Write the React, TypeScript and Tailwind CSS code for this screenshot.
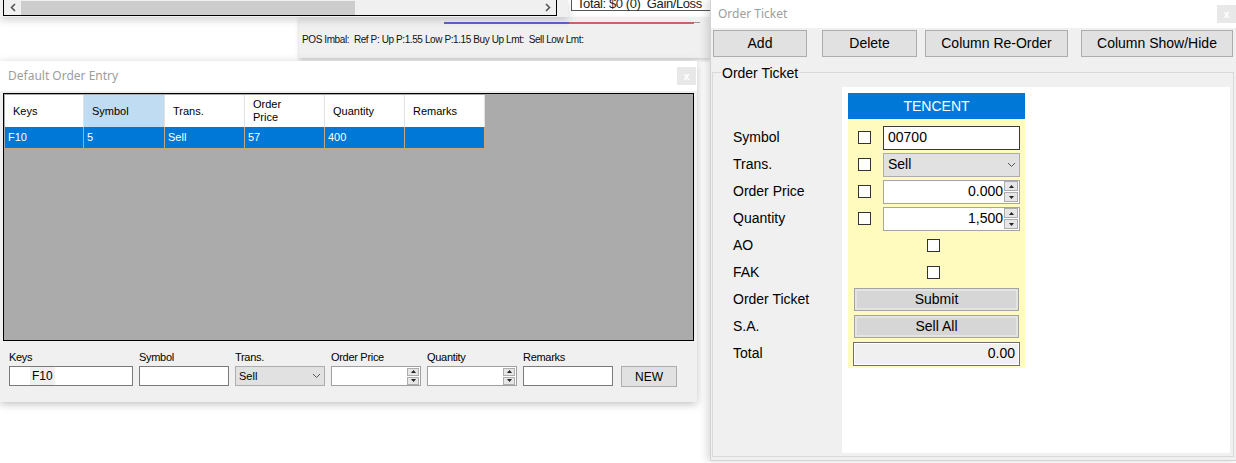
import React from 'react';

const Chevron = ({ w = 9 }: { w?: number }) => (
  <svg width={w} height="6" viewBox="0 0 9 6">
    <path d="M1 1 L4.5 4.5 L8 1" fill="none" stroke="#555" strokeWidth="1" />
  </svg>
);

const Spinner = ({ size = 'lg' }: { size?: 'lg' | 'sm' }) => {
  const box =
    size === 'lg'
      ? 'w-[14px] h-[10px]'
      : 'w-[12px] h-[8px]';
  return (
    <div className="flex flex-col gap-[1px] mr-[1px]">
      <div className={`${box} bg-[#e6e6e6] border border-[#adadad] flex items-center justify-center`}>
        <svg width="5" height="3" viewBox="0 0 5 3"><path d="M0 3 L2.5 0 L5 3Z" fill="#222" /></svg>
      </div>
      <div className={`${box} bg-[#e6e6e6] border border-[#adadad] flex items-center justify-center`}>
        <svg width="5" height="3" viewBox="0 0 5 3"><path d="M0 0 L2.5 3 L5 0Z" fill="#222" /></svg>
      </div>
    </div>
  );
};

const CloseBtn = () => (
  <div className="w-[19px] h-[18px] bg-[#e8e8e8] flex items-center justify-center text-white text-[11px] leading-none font-bold">
    x
  </div>
);

const Check = () => <div className="w-[13px] h-[13px] border border-[#333] bg-white" />;

const columns = [
  { head: 'Keys', val: 'F10', w: 'w-[79px]' },
  { head: 'Symbol', val: '5', w: 'w-[81px]', hl: true },
  { head: 'Trans.', val: 'Sell', w: 'w-[80px]' },
  { head: 'Order\nPrice', val: '57', w: 'w-[80px]' },
  { head: 'Quantity', val: '400', w: 'w-[80px]' },
  { head: 'Remarks', val: '', w: 'w-[80px]' },
];

const formFields = [
  { label: 'Keys', w: 'w-[124px]', kind: 'keys' },
  { label: 'Symbol', w: 'w-[90px]', kind: 'text' },
  { label: 'Trans.', w: 'w-[90px]', kind: 'select' },
  { label: 'Order Price', w: 'w-[90px]', kind: 'spin' },
  { label: 'Quantity', w: 'w-[90px]', kind: 'spin' },
  { label: 'Remarks', w: 'w-[90px]', kind: 'text' },
];

const ticketLabels = ['Symbol', 'Trans.', 'Order Price', 'Quantity', 'AO', 'FAK', 'Order Ticket', 'S.A.', 'Total'];

export default function App() {
  return (
    <div className="relative w-[1236px] h-[463px] overflow-hidden bg-white font-['Liberation_Sans',Arial,sans-serif] text-black">
      {/* POS imbalance panel */}
      <div className="absolute left-[299px] top-[17px] w-[411px] h-[41px] bg-[#f0f0f0] shadow-[0_2px_4px_rgba(0,0,0,0.2)] flex flex-col">
        <div className="flex mt-[5px] ml-[145px]">
          <div className="w-[125px] h-[2px] bg-[#6262c8]" />
          <div className="w-[125px] h-[2px] bg-[#c86464]" />
          <div className="w-[6px] h-[1px] bg-[#999]" />
        </div>
        <div className="mt-[10px] pl-[3px] text-[10px] leading-[12px] tracking-[-0.4px] text-[#111] whitespace-pre">
          POS Imbal:  Ref P: Up P:1.55 Low P:1.15 Buy Up Lmt:  Sell Low Lmt:
        </div>
      </div>

      {/* top window with scrollbar */}
      <div className="absolute left-0 top-0 w-[568px] h-[17px] bg-[#f0f0f0] shadow-[0_3px_8px_rgba(0,0,0,0.18)]">
        <div className="ml-[3px] -mt-[1px] w-[554px] h-[17px] border border-black bg-[#f0f0f0] flex items-center">
          <div className="w-[17px] flex justify-center">
            <svg width="6" height="9" viewBox="0 0 6 9"><path d="M5 1 L1.5 4.5 L5 8" fill="none" stroke="#555" strokeWidth="1.6" /></svg>
          </div>
          <div className="w-[334px] h-[14px] bg-[#cdcdcd]" />
          <div className="flex-1" />
          <div className="w-[17px] flex justify-center">
            <svg width="6" height="9" viewBox="0 0 6 9"><path d="M1 1 L4.5 4.5 L1 8" fill="none" stroke="#555" strokeWidth="1.6" /></svg>
          </div>
        </div>
      </div>

      {/* total box */}
      <div className="absolute left-[571px] -top-[4px] w-[200px] h-[15px] border-l border-b border-[#555] bg-white pl-[5px] text-[13px] leading-[15px] tracking-[-0.4px] whitespace-pre text-[#222]">
        Total: $0 (0)  Gain/Loss
      </div>

      {/* Default Order Entry window */}
      <div className="absolute left-0 top-[61px] w-[697px] h-[341px] bg-[#f0f0f0] shadow-[0_2px_8px_rgba(0,0,0,0.25)] flex flex-col">
        <div className="h-[30px] bg-white flex items-center justify-between pl-[8px] pr-[1px]">
          <span className="font-['Noto_Sans',sans-serif] text-[12px] text-[#9d9d9d]">Default Order Entry</span>
          <CloseBtn />
        </div>
        <div className="mt-[2px] mx-[3px] h-[248px] border border-black bg-[#ababab] p-[1px]">
          <div className="flex">
            {columns.map((c) => (
              <div
                key={c.head}
                className={`${c.w} h-[32px] border-r border-[#e2e2e2] flex items-center pl-[8px] text-[11px] leading-[13px] whitespace-pre ${c.hl ? 'bg-[#bfdcf3]' : 'bg-white'}`}
              >
                {c.head}
              </div>
            ))}
          </div>
          <div className="flex">
            {columns.map((c) => (
              <div
                key={c.head}
                className={`${c.w} h-[22px] bg-[#0078d7] border-r border-b border-[#c2a783] flex items-center pl-[3px] text-[11px] text-white`}
              >
                {c.val}
              </div>
            ))}
          </div>
        </div>
        <div className="flex items-end pl-[9px] mt-[9px]">
          <div className="flex gap-[6px]">
            {formFields.map((f) => (
              <div key={f.label} className="flex flex-col">
                <div className="text-[11px] leading-[14px] tracking-[-0.3px] mb-[2px]">{f.label}</div>
                {f.kind === 'keys' && (
                  <div className={`${f.w} h-[20px] bg-white border border-[#7a7a7a] flex items-center pl-[20px]`}>
                    <span className="bg-[#f0f0f0] px-[2px] text-[12px]">F10</span>
                  </div>
                )}
                {f.kind === 'text' && <div className={`${f.w} h-[20px] bg-white border border-[#7a7a7a]`} />}
                {f.kind === 'select' && (
                  <div className={`${f.w} h-[20px] bg-[#e1e1e1] border border-[#adadad] flex items-center justify-between pl-[3px] pr-[3px] text-[11px]`}>
                    <span>Sell</span>
                    <Chevron />
                  </div>
                )}
                {f.kind === 'spin' && (
                  <div className={`${f.w} h-[20px] bg-white border border-[#a0a0a0] flex items-center justify-end`}>
                    <Spinner size="sm" />
                  </div>
                )}
              </div>
            ))}
          </div>
          <div className="ml-[8px] w-[56px] h-[21px] bg-[#e1e1e1] border border-[#adadad] flex items-center justify-center text-[12px] mb-[-1px]">
            NEW
          </div>
        </div>
      </div>

      {/* Order Ticket window */}
      <div className="absolute left-[710px] top-0 w-[527px] h-[461px] bg-[#f0f0f0] border-l border-b border-[#d3d3d3] shadow-[-3px_0_8px_rgba(0,0,0,0.15)] flex flex-col">
        <div className="h-[28px] bg-white flex items-start justify-between pl-[7px] pr-[1px]">
          <span className="mt-[5px] font-['Noto_Sans',sans-serif] text-[12px] text-[#9d9d9d]">Order Ticket</span>
          <div className="mt-[5px]">
            <CloseBtn />
          </div>
        </div>
        <div className="mt-[2px] pl-[2px] flex text-[14px]">
          <div className="w-[94px] h-[27px] bg-[#e1e1e1] border border-[#adadad] flex items-center justify-center">Add</div>
          <div className="ml-[15px] w-[95px] h-[27px] bg-[#e1e1e1] border border-[#adadad] flex items-center justify-center">Delete</div>
          <div className="ml-[8px] w-[143px] h-[27px] bg-[#e1e1e1] border border-[#adadad] flex items-center justify-center">Column Re-Order</div>
          <div className="ml-[13px] w-[152px] h-[27px] bg-[#e1e1e1] border border-[#adadad] flex items-center justify-center">Column Show/Hide</div>
        </div>
        <div className="relative mt-[15px] mb-[3px] ml-[1px] mr-[3px] flex-1 border border-[#d9d9d9] flex pt-[14px] pb-[3px] pr-[3px]">
          <div className="absolute -top-[8px] left-[8px] px-[1px] bg-[#f0f0f0] text-[14px] leading-[16px]">Order Ticket</div>
          <div className="w-[129px] pt-[37px] pl-[20px] flex flex-col text-[14px]">
            {ticketLabels.map((l) => (
              <div key={l} className="h-[27px] flex items-center">{l}</div>
            ))}
          </div>
          <div className="flex-1 bg-white pt-[6px] pl-[6px]">
            <div className="w-[177px] bg-[#fffabe] pb-[1px]">
              <div className="h-[26px] bg-[#0078d7] text-white text-[14px] flex items-center justify-center">TENCENT</div>
              <div className="pt-[5px] flex flex-col text-[14px]">
                <div className="h-[27px] flex items-center pl-[10px]">
                  <Check />
                  <div className="ml-[12px] w-[137px] h-[24px] bg-white border border-[#3a3a3a] flex items-center pl-[4px]">00700</div>
                </div>
                <div className="h-[27px] flex items-center pl-[10px]">
                  <Check />
                  <div className="ml-[12px] w-[137px] h-[24px] bg-[#e1e1e1] border border-[#adadad] flex items-center justify-between pl-[4px] pr-[3px]">
                    <span>Sell</span>
                    <Chevron />
                  </div>
                </div>
                <div className="h-[27px] flex items-center pl-[10px]">
                  <Check />
                  <div className="ml-[12px] w-[137px] h-[24px] bg-white border border-[#a5a5a5] flex items-center justify-end">
                    <span className="mr-[1px]">0.000</span>
                    <Spinner />
                  </div>
                </div>
                <div className="h-[27px] flex items-center pl-[10px]">
                  <Check />
                  <div className="ml-[12px] w-[137px] h-[24px] bg-white border border-[#a5a5a5] flex items-center justify-end">
                    <span className="mr-[1px]">1,500</span>
                    <Spinner />
                  </div>
                </div>
                <div className="h-[27px] flex items-center pl-[79px]">
                  <Check />
                </div>
                <div className="h-[27px] flex items-center pl-[79px]">
                  <Check />
                </div>
                <div className="h-[27px] flex items-center pl-[6px]">
                  <div className="w-[165px] h-[23px] bg-[#d6d6d6] border border-[#a3a3a3] shadow-[inset_0_0_0_2px_#e4e4e4] flex items-center justify-center">Submit</div>
                </div>
                <div className="h-[27px] flex items-center pl-[6px]">
                  <div className="w-[165px] h-[23px] bg-[#d6d6d6] border border-[#a3a3a3] shadow-[inset_0_0_0_2px_#e4e4e4] flex items-center justify-center">Sell All</div>
                </div>
                <div className="h-[27px] flex items-center pl-[5px]">
                  <div className="w-[167px] h-[24px] bg-[#f0f0f0] border border-[#6e6e6e] shadow-[inset_0_0_0_1px_#ffffff] flex items-center justify-end pr-[4px]">0.00</div>
                </div>
              </div>
            </div>
          </div>
        </div>
      </div>
    </div>
  );
}
